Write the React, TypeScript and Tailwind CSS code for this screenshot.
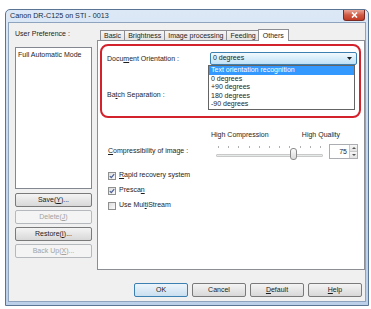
import React from 'react';

const font = { fontFamily: '"Liberation Sans", Arial, sans-serif' };

function U({ children }: { children: React.ReactNode }) {
  return <span className="underline underline-offset-[1px]">{children}</span>;
}

function WinButton({ children, disabled, primary, className = '' }: { children: React.ReactNode; disabled?: boolean; primary?: boolean; className?: string }) {
  const base = disabled
    ? 'border-[#b5b9bd] bg-[#f4f4f4] text-[#a3a3a3]'
    : primary
      ? 'border-[#3c7fb1] bg-linear-to-b from-[#eef5fb] to-[#c9dff0] text-[#1b1b1b]'
      : 'border-[#7a7a7a] bg-linear-to-b from-[#f4f4f4] to-[#d8d8d8] text-[#1b1b1b]';
  return (
    <div className={`h-[14px] border rounded-[2px] flex items-center justify-center text-[7px] ${base} ${className}`}>
      {children}
    </div>
  );
}

function Check({ checked, children }: { checked?: boolean; children: React.ReactNode }) {
  return (
    <div className="h-[15px] flex items-center gap-[3px]">
      <div className="w-[8px] h-[8px] border border-[#8e8f8f] bg-linear-to-br from-[#dcdcdc] to-[#fbfbfb] flex items-center justify-center">
        {checked && (
          <svg width="6" height="6" viewBox="0 0 6 6">
            <path d="M0.8 3.2 L2.3 4.7 L5.2 1.2" fill="none" stroke="#4a5f97" strokeWidth="1.2" />
          </svg>
        )}
      </div>
      <span>{children}</span>
    </div>
  );
}

function Slider() {
  const ticks = Array.from({ length: 11 });
  return (
    <div className="relative w-[111px] h-[16px] ml-[3px]">
      <div className="absolute left-[4px] right-[4px] top-[2px] flex justify-between">
        {ticks.map((_, i) => (
          <div key={i} className="w-px h-[2px] bg-[#b0b0b0]" />
        ))}
      </div>
      <div className="absolute left-[2px] right-[2px] top-[10px] h-[3px] border border-[#c9c9c9] bg-[#e7eaea] rounded-[1px]" />
      <div className="absolute left-[76px] top-[4px] w-[7px] h-[12px] border border-[#8a8a8a] rounded-[3px] bg-linear-to-b from-[#fbfbfb] to-[#dadada]" />
    </div>
  );
}

export default function App() {
  const items = ['Text orientation recognition', '0 degrees', '+90 degrees', '180 degrees', '-90 degrees'];
  return (
    <div className="w-[371px] h-[309px] bg-white overflow-hidden text-[#1e1e1e]" style={font}>
      <div className="ml-[5px] mt-[9px] w-[364px] h-[297px] border border-[#5a7494] rounded-t-[5px] bg-linear-to-b from-[#dce8f6] via-[#c6d8ee] to-[#bcd0ea] flex flex-col">
        {/* title bar */}
        <div className="h-[12px] flex items-start justify-between">
          <span className="text-[7.2px] leading-[12px] ml-[4px] text-[#1b2a3c]">Canon DR-C125 on STI - 0013</span>
          <div className="w-[22px] h-[11px] mr-[3px] rounded-b-[3px] border border-t-0 border-[#7a2a22] bg-linear-to-b from-[#e9a597] via-[#cf5a45] to-[#c23a23] flex items-center justify-center">
            <svg width="7" height="6" viewBox="0 0 7 6">
              <path d="M1 0.5 L6 5.5 M6 0.5 L1 5.5" stroke="white" strokeWidth="1.6" />
            </svg>
          </div>
        </div>

        {/* client */}
        <div className="flex-1 mx-[2px] mb-[3px] border border-[#8ea3bd] bg-[#f0f0f0] flex flex-col pt-[5px] text-[7px]">
          <div className="flex pl-[6px] gap-[5px]">
            {/* left column */}
            <div className="w-[77px] flex flex-col">
              <div className="h-[12px] leading-[12px]">User Preference :</div>
              <div className="mt-[7px] h-[142px] border border-[#828790] bg-white px-[2px] pt-[2px]">
                Full Automatic Mode
              </div>
              <div className="mt-[4px] flex flex-col gap-[3px]">
                <WinButton>Save(<U>Y</U>)...</WinButton>
                <WinButton disabled>Delete(<U>J</U>)</WinButton>
                <WinButton>Restore(<U>I</U>)...</WinButton>
                <WinButton disabled>Back Up(<U>X</U>)...</WinButton>
              </div>
            </div>

            {/* right column: tabs */}
            <div className="w-[268px] flex flex-col">
              <div className="h-[12px] flex items-end pl-[3px]">
                {['Basic', 'Brightness', 'Image processing', 'Feeding'].map((t) => (
                  <div key={t} className="h-[10px] px-[3px] border border-b-0 border-[#8c8e94] -ml-px first:ml-0 bg-linear-to-b from-[#f5f5f5] to-[#e4e4e4] leading-[10px]">
                    {t}
                  </div>
                ))}
                <div className="h-[12px] px-[4px] border border-b-0 border-[#8c8e94] -ml-[2px] bg-white leading-[11px] relative top-px z-10">
                  Others
                </div>
              </div>
              <div className="h-[230px] border border-[#8c8e94] bg-white flex flex-col">
                {/* red highlight */}
                <div className="relative mt-[3px] ml-[2px] w-[261px] h-[74px] border-[2px] border-[#d3222c] rounded-[8px] pl-[5px] pt-[6px] z-20">
                  <div className="flex items-center h-[13px]">
                    <div className="w-[103px] pt-[2px]">
                      Docu<U>m</U>ent Orientation :
                    </div>
                    <div className="w-[147px] h-[13px] border border-[#3c7fb1] rounded-[2px] bg-linear-to-b from-[#f2f9fd] to-[#bfe1f6] flex items-center justify-between pl-[2px] pr-[4px]">
                      <span>0 degrees</span>
                      <svg width="5" height="3" viewBox="0 0 5 3"><path d="M0 0 H5 L2.5 3 Z" fill="#1e1e1e" /></svg>
                    </div>
                  </div>
                  <div className="flex items-center h-[13px] mt-[24px]">
                    <div className="w-[103px]">
                      Ba<U>t</U>ch Separation :
                    </div>
                  </div>
                  {/* dropdown list */}
                  <div className="absolute left-[106px] top-[19px] w-[147px] h-[45px] border border-[#646464] bg-white flex flex-col">
                    {items.map((it, i) => (
                      <div key={it} className={`h-[8.6px] leading-[8.6px] px-[2px] ${i === 0 ? 'bg-[#3399ff] text-white' : ''}`}>
                        {it}
                      </div>
                    ))}
                  </div>
                </div>

                {/* compression */}
                <div className="flex mt-[13px] pl-[10px]">
                  <div className="w-[103px] pt-[15px] h-fit">
                    <span className="leading-[8px]"><U>C</U>ompressibility of image :</span>
                  </div>
                  <div className="w-[147px] flex flex-col">
                    <div className="h-[8px] leading-[8px] flex justify-between pr-[18px]">
                      <span>High Compression</span>
                      <span>High Quality</span>
                    </div>
                    <div className="flex items-start mt-[5px]">
                      <Slider />
                      <div className="ml-[4px] w-[29px] h-[15px] border border-[#abadb3] bg-white flex">
                        <div className="flex-1 text-right pr-[2px] leading-[13px]">75</div>
                        <div className="w-[8px] flex flex-col border-l border-[#c8c8c8]">
                          <div className="flex-1 bg-linear-to-b from-[#f7f7f7] to-[#e2e2e2] border-b border-[#c8c8c8] flex items-center justify-center">
                            <svg width="4" height="2" viewBox="0 0 4 2"><path d="M0 2 H4 L2 0 Z" fill="#555" /></svg>
                          </div>
                          <div className="flex-1 bg-linear-to-b from-[#f7f7f7] to-[#e2e2e2] flex items-center justify-center">
                            <svg width="4" height="2" viewBox="0 0 4 2"><path d="M0 0 H4 L2 2 Z" fill="#555" /></svg>
                          </div>
                        </div>
                      </div>
                    </div>
                  </div>
                </div>

                {/* checkboxes */}
                <div className="mt-[8px] pl-[10px] flex flex-col">
                  <Check checked><U>R</U>apid recovery system</Check>
                  <Check checked>Presca<U>n</U></Check>
                  <Check>Use Mul<U>t</U>iStream</Check>
                </div>
              </div>
            </div>
          </div>

          {/* bottom buttons */}
          <div className="mt-[13px] flex justify-end gap-[4px] pr-[3px]">
            <WinButton primary className="w-[54px]">OK</WinButton>
            <WinButton className="w-[54px]">Cancel</WinButton>
            <WinButton className="w-[54px]"><U>D</U>efault</WinButton>
            <WinButton className="w-[54px]"><U>H</U>elp</WinButton>
          </div>
        </div>
      </div>
    </div>
  );
}
